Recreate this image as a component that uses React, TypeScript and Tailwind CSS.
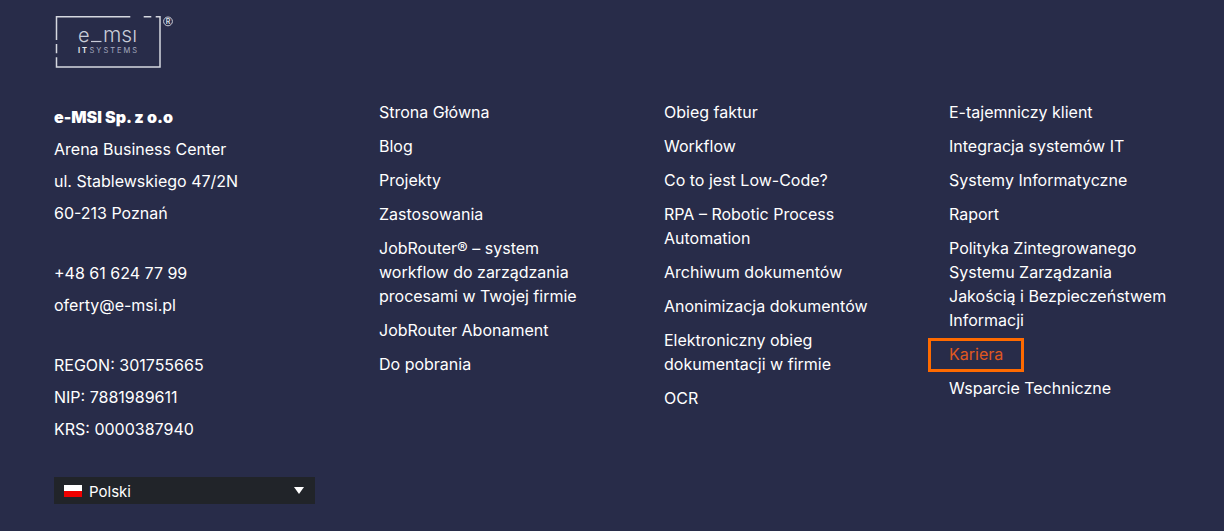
const company = [
  ["Arena Business Center", "ul. Stablewskiego 47/2N", "60-213 Poznań"],
  ["+48 61 624 77 99", "oferty@e-msi.pl"],
  ["REGON: 301755665", "NIP: 7881989611", "KRS: 0000387940"],
];

const columns: string[][] = [
  [
    "Strona Główna",
    "Blog",
    "Projekty",
    "Zastosowania",
    "JobRouter® – system workflow do zarządzania procesami w Twojej firmie",
    "JobRouter Abonament",
    "Do pobrania",
  ],
  [
    "Obieg faktur",
    "Workflow",
    "Co to jest Low-Code?",
    "RPA – Robotic Process Automation",
    "Archiwum dokumentów",
    "Anonimizacja dokumentów",
    "Elektroniczny obieg dokumentacji w firmie",
    "OCR",
  ],
  [
    "E-tajemniczy klient",
    "Integracja systemów IT",
    "Systemy Informatyczne",
    "Raport",
    "Polityka Zintegrowanego Systemu Zarządzania Jakością i Bezpieczeństwem Informacji",
    "Kariera",
    "Wsparcie Techniczne",
  ],
];

function Logo() {
  return (
    <svg width="122" height="56" viewBox="0 0 122 56" role="img" aria-label="e_msi IT Systems" className="block">
      <path
        d="M76.3 2.7H2.5V26M89.7 2.7H97.3M101.7 2.7H106V53H2.5V43.3M2.5 30V39.3"
        fill="none"
        stroke="#d5d8e0"
        strokeWidth="1.5"
      />
      <text x="24" y="27.5" fontSize="20" className="fill-[#c9ccd8] font-['Inter'] font-light">e</text>
      <path d="M37 27.5H47.5" stroke="#c9ccd8" strokeWidth="1.2" />
      <text x="49" y="27.5" fontSize="21" className="fill-[#c9ccd8] font-['Inter'] font-light">msı</text>
      <text x="24" y="39.3" fontSize="7.5" className="fill-[#e2e4ea] font-['Inter'] font-bold tracking-[2px]">IT</text>
      <text x="35.5" y="39.3" fontSize="7.5" className="fill-[#a9adc0] font-['Inter'] tracking-[2px]">SYSTEMS</text>
      <circle cx="114" cy="7.4" r="4.4" fill="none" stroke="#c9ccd8" strokeWidth="1" />
      <text x="114" y="10" fontSize="7" textAnchor="middle" className="fill-[#dfe1e8] font-['Inter'] font-semibold">R</text>
    </svg>
  );
}

function FooterLink({ label }: { label: string }) {
  if (label === "Kariera") {
    return (
      <a href="#" className="relative inline-block text-[#e0581f]">
        {label}
        <span className="absolute -inset-x-[21px] -top-1 -bottom-1.5 border-3 border-[#ff6a00]" />
      </a>
    );
  }
  return <a href="#" className="block hover:text-[#e0581f]">{label}</a>;
}

function LanguageSelect() {
  return (
    <div className="relative mt-8 text-[15px]">
      <select
        aria-label="Język"
        className="block h-[27px] w-full appearance-none bg-[#212429] pt-1 pr-8 pl-[35px] text-white"
      >
        <option>Polski</option>
      </select>
      <svg width="18" height="12" viewBox="0 0 18 12" className="pointer-events-none absolute top-2 left-2.5">
        <path d="M0 0h18v6H0z" fill="#fff" />
        <path d="M0 6h18v6H0z" fill="#f00000" />
      </svg>
      <svg width="10" height="7" viewBox="0 0 10 7" className="pointer-events-none absolute top-2.5 right-[11px]">
        <path d="M0 0h10L5 7z" fill="#fff" />
      </svg>
    </div>
  );
}

export default function App() {
  return (
    <footer className="min-h-screen bg-[#282c49] px-[54px] pt-3.5 pb-6 font-['Inter',sans-serif] text-base text-white">
      <a href="#" className="inline-block align-top">
        <Logo />
      </a>
      <div className="mt-[30px] grid grid-cols-[261fr_221fr_221fr_221fr] gap-x-16">
        <div className="pt-px">
          <address className="flex flex-col gap-7 leading-8 not-italic">
            {company.map((lines, i) => (
              <p key={i}>
                {i === 0 && <strong className="block font-black">e-MSI Sp. z o.o</strong>}
                {lines.map((line) => (
                  <span key={line} className="block">{line}</span>
                ))}
              </p>
            ))}
          </address>
          <LanguageSelect />
        </div>
        {columns.map((links) => (
          <ul key={links[0]} className="flex flex-col gap-2.5 leading-6">
            {links.map((label) => (
              <li key={label}>
                <FooterLink label={label} />
              </li>
            ))}
          </ul>
        ))}
      </div>
    </footer>
  );
}
